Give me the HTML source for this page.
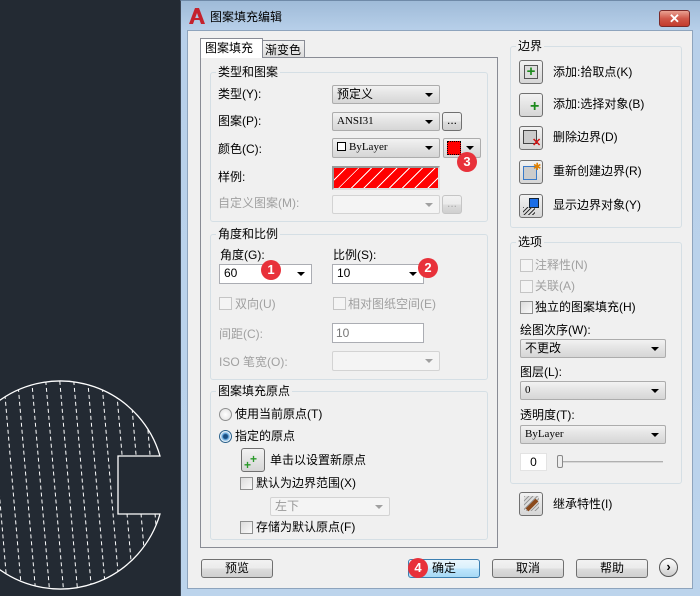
<!DOCTYPE html>
<html><head><meta charset="utf-8"><style>
*{margin:0;padding:0;box-sizing:border-box}
body{width:700px;height:596px;overflow:hidden;background:#232a33;position:relative;font-family:"Liberation Sans","Noto Sans CJK SC",sans-serif;font-size:12px;color:#000}
.a{position:absolute}
.t{position:absolute;white-space:nowrap;line-height:14px;font-size:12px}
.dis{color:#a0a0a0}
.grp{position:absolute;border:1px solid #d5dfe5;border-radius:3px}
.gt{position:absolute;background:#f0f0f0;padding:0 2px;font-size:12px;line-height:14px;top:-8px;left:5px}
.cb{position:absolute;border:1px solid #acacac;border-radius:2px;background:linear-gradient(#f2f2f2,#e3e3e3 50%,#d6d6d6);font-size:11px;padding-left:4px;line-height:17px;font-family:"Liberation Serif","Noto Sans CJK SC",serif}
.cb:after{content:"";position:absolute;right:6px;top:7px;border-left:4px solid transparent;border-right:4px solid transparent;border-top:4px solid #000}
.cbw{background:#fff;border-color:#abadb3;border-radius:0}
.cbd{background:#f4f4f4;border-color:#d3d3d3;color:#999}
.cbd:after{border-top-color:#a0a0a0}
.btn{position:absolute;border:1px solid #707070;border-radius:3px;background:linear-gradient(#f2f2f2,#ebebeb 50%,#dddddd 51%,#cfcfcf);text-align:center;line-height:16px;font-size:12px}
.chk{position:absolute;width:13px;height:13px;border:1px solid #8e8f8f;background:linear-gradient(135deg,#dcdcdc,#fafafa)}
.chkd{border-color:#c5c5c5;background:#f4f4f4}
.ib{position:absolute;width:24px;height:24px;border:1px solid #707070;border-radius:3px;background:linear-gradient(#f2f2f2,#d6d6d6)}
.badge{position:absolute;width:20px;height:20px;border-radius:50%;background:#e8313a;color:#fff;text-align:center;line-height:20px;font-size:13px;font-weight:bold}
</style></head><body>

<svg class="a" style="left:0;top:360px" width="180" height="236">
<defs><clipPath id="c"><path d="M160,96 A104,104 0 1,0 160,154 L118,154 L118,96 Z"/></clipPath></defs>
<g clip-path="url(#c)" stroke="#fff" stroke-width="1" stroke-dasharray="4,3">
<line x1="-40" y1="0" x2="-20" y2="236"/><line x1="-26" y1="0" x2="-6" y2="236"/><line x1="-12" y1="0" x2="8" y2="236"/><line x1="2" y1="0" x2="22" y2="236"/><line x1="16" y1="0" x2="36" y2="236"/><line x1="30" y1="0" x2="50" y2="236"/><line x1="44" y1="0" x2="64" y2="236"/><line x1="58" y1="0" x2="78" y2="236"/><line x1="72" y1="0" x2="92" y2="236"/><line x1="86" y1="0" x2="106" y2="236"/><line x1="100" y1="0" x2="120" y2="236"/><line x1="114" y1="0" x2="134" y2="236"/><line x1="128" y1="0" x2="148" y2="236"/><line x1="142" y1="0" x2="162" y2="236"/><line x1="156" y1="0" x2="176" y2="236"/>
</g>
<path d="M160,96 A104,104 0 1,0 160,154 L118,154 L118,96 Z" fill="none" stroke="#fff" stroke-width="1.3"/>
</svg>

<div class="a" style="left:180px;top:0;width:520px;height:596px;background:linear-gradient(#9fbbd8,#b8d0ea 30px,#bcd4ec);border-left:1px solid #3a4452;border-top:1px solid #6f8aa8"></div>
<div class="a" style="left:187px;top:30px;width:506px;height:559px;background:#f0f0f0;border:1px solid #8ea4bd"></div>
<svg class="a" style="left:188px;top:7px" width="18" height="18"><path d="M1,17 L7,1 L11,1 L17,17 L13,17 L9,6 L5,17Z" fill="#c4222d"/><path d="M6,12 L12,12" stroke="#c4222d" stroke-width="2"/></svg>
<div class="t" style="left:210px;top:10px;font-size:12px">图案填充编辑</div>
<div class="a" style="left:659px;top:10px;width:31px;height:17px;border:1px solid #7a2a2a;border-radius:3px;background:linear-gradient(#e9a293,#d0584a 50%,#c33b2d);color:#fff;text-align:center;font-weight:bold;line-height:15px;font-size:13px">✕</div>

<div class="a" style="left:200px;top:57px;width:298px;height:491px;border:1px solid #898c95;background:#fff"></div>
<div class="a" style="left:262px;top:40px;width:43px;height:18px;border:1px solid #898c95;background:linear-gradient(#f2f2f2,#dcdcdc)"></div>
<div class="t" style="left:265px;top:43px">渐变色</div>
<div class="a" style="left:200px;top:38px;width:63px;height:21px;border:1px solid #898c95;border-bottom:none;background:#fff"></div>
<div class="t" style="left:205px;top:41px">图案填充</div>
<div class="a" style="left:201px;top:58px;width:296px;height:489px;background:#f0f0f0"></div>

<div class="grp" style="left:210px;top:72px;width:278px;height:150px"><div class="gt">类型和图案</div></div>
<div class="t" style="left:218px;top:87px">类型(Y):</div>
<div class="t" style="left:218px;top:114px">图案(P):</div>
<div class="t" style="left:218px;top:142px">颜色(C):</div>
<div class="t" style="left:218px;top:170px">样例:</div>
<div class="t dis" style="left:218px;top:196px">自定义图案(M):</div>
<div class="cb" style="left:332px;top:85px;width:108px;height:19px;font-family:'Liberation Sans','Noto Sans CJK SC',sans-serif;font-size:12px">预定义</div>
<div class="cb" style="left:332px;top:112px;width:108px;height:19px">ANSI31</div>
<div class="btn" style="left:442px;top:112px;width:20px;height:19px;line-height:14px">...</div>
<div class="cb" style="left:332px;top:138px;width:108px;height:20px"><span style="display:inline-block;width:9px;height:9px;border:1px solid #000;background:#fff;margin-right:3px;vertical-align:-1px"></span>ByLayer</div>
<div class="cb" style="left:443px;top:138px;width:38px;height:20px"><span class="a" style="left:3px;top:2px;width:14px;height:14px;border:1px dotted #000;background:#f00"></span></div>
<div class="a" style="left:332px;top:166px;width:108px;height:24px;border:2px solid #9a9a9a;border-right-color:#ddd;border-bottom-color:#ddd;background:repeating-linear-gradient(135deg,#f00 0 8px,#fff 8px 9px)"></div>
<div class="cb cbd" style="left:332px;top:195px;width:108px;height:19px"></div>
<div class="btn" style="left:442px;top:195px;width:20px;height:19px;border-color:#c5c5c5;color:#aaa;line-height:14px">...</div>

<div class="grp" style="left:210px;top:234px;width:278px;height:146px"><div class="gt">角度和比例</div></div>
<div class="t" style="left:220px;top:248px">角度(G):</div>
<div class="t" style="left:333px;top:248px">比例(S):</div>
<div class="cb cbw" style="left:219px;top:264px;width:93px;height:20px;font-family:'Liberation Sans',sans-serif;font-size:12px">60</div>
<div class="cb cbw" style="left:332px;top:264px;width:92px;height:20px;font-family:'Liberation Sans',sans-serif;font-size:12px">10</div>
<div class="chk chkd" style="left:219px;top:297px"></div><div class="t dis" style="left:235px;top:297px">双向(U)</div>
<div class="chk chkd" style="left:333px;top:297px"></div><div class="t dis" style="left:348px;top:297px">相对图纸空间(E)</div>
<div class="t dis" style="left:219px;top:327px">间距(C):</div>
<div class="a" style="left:332px;top:323px;width:92px;height:20px;border:1px solid #abadb3;background:#fff;padding-left:3px;line-height:18px;color:#777">10</div>
<div class="t dis" style="left:219px;top:355px">ISO 笔宽(O):</div>
<div class="cb cbd" style="left:332px;top:351px;width:108px;height:20px"></div>

<div class="grp" style="left:210px;top:391px;width:278px;height:149px"><div class="gt">图案填充原点</div></div>
<div class="a" style="left:219px;top:408px;width:13px;height:13px;border-radius:50%;border:1px solid #8e8f8f;background:radial-gradient(#fff,#ddd)"></div>
<div class="t" style="left:235px;top:407px">使用当前原点(T)</div>
<div class="a" style="left:219px;top:430px;width:13px;height:13px;border-radius:50%;border:1px solid #2c628b;background:radial-gradient(#1a4d80 0 2px,#5aa0d8 3px,#e8f2fa 5px)"></div>
<div class="t" style="left:235px;top:429px">指定的原点</div>
<div class="ib" style="left:241px;top:448px"><span class="a" style="left:8px;top:3px;color:#2a9a2a;font-weight:bold;font-size:12px">+</span><span class="a" style="left:2px;top:9px;color:#2a9a2a;font-weight:bold;font-size:12px">+</span></div>
<div class="t" style="left:270px;top:453px">单击以设置新原点</div>
<div class="chk" style="left:240px;top:477px"></div><div class="t" style="left:256px;top:476px">默认为边界范围(X)</div>
<div class="cb cbd" style="left:270px;top:497px;width:120px;height:19px;font-family:'Liberation Sans','Noto Sans CJK SC',sans-serif;font-size:12px">左下</div>
<div class="chk" style="left:240px;top:521px"></div><div class="t" style="left:256px;top:520px">存储为默认原点(F)</div>

<div class="grp" style="left:510px;top:46px;width:172px;height:182px"><div class="gt">边界</div></div>
<div class="ib" style="left:519px;top:60px"><span class="a" style="left:4px;top:4px;width:14px;height:14px;border:1px solid #555;background:#ddd;color:#1c8a1c;font-weight:bold;font-size:15px;line-height:12px;text-align:center">+</span></div>
<div class="t" style="left:553px;top:65px">添加:拾取点(K)</div>
<div class="ib" style="left:519px;top:93px"><span class="a" style="left:10px;top:6px;color:#1c8a1c;font-weight:bold;font-size:16px;line-height:14px">+</span></div>
<div class="t" style="left:553px;top:97px">添加:选择对象(B)</div>
<div class="ib" style="left:519px;top:126px"><span class="a" style="left:3px;top:3px;width:14px;height:14px;border:1px solid #444;background:#ccc"></span><span class="a" style="left:12px;top:9px;color:#d01010;font-weight:bold;font-size:11px">✕</span></div>
<div class="t" style="left:553px;top:130px">删除边界(D)</div>
<div class="ib" style="left:519px;top:160px"><span class="a" style="left:3px;top:5px;width:14px;height:14px;border:1px solid #3a7ac8;background:#ccc"></span><span class="a" style="left:13px;top:1px;color:#e08000;font-size:10px">✱</span></div>
<div class="t" style="left:553px;top:164px">重新创建边界(R)</div>
<div class="ib" style="left:519px;top:194px"><span class="a" style="left:9px;top:3px;width:10px;height:10px;background:#1a6ee8;border:1px solid #123"></span><span class="a" style="left:3px;top:12px;width:12px;height:8px;background:repeating-linear-gradient(135deg,#333 0 1px,transparent 1px 3px)"></span></div>
<div class="t" style="left:553px;top:198px">显示边界对象(Y)</div>

<div class="grp" style="left:510px;top:242px;width:172px;height:242px"><div class="gt">选项</div></div>
<div class="chk chkd" style="left:520px;top:259px"></div><div class="t dis" style="left:535px;top:258px">注释性(N)</div>
<div class="chk chkd" style="left:520px;top:280px"></div><div class="t dis" style="left:535px;top:279px">关联(A)</div>
<div class="chk" style="left:520px;top:301px"></div><div class="t" style="left:535px;top:300px">独立的图案填充(H)</div>
<div class="t" style="left:520px;top:323px">绘图次序(W):</div>
<div class="cb" style="left:520px;top:339px;width:146px;height:19px;font-family:'Liberation Sans','Noto Sans CJK SC',sans-serif;font-size:12px">不更改</div>
<div class="t" style="left:520px;top:365px">图层(L):</div>
<div class="cb" style="left:520px;top:381px;width:146px;height:19px">0</div>
<div class="t" style="left:520px;top:408px">透明度(T):</div>
<div class="cb" style="left:520px;top:425px;width:146px;height:19px">ByLayer</div>
<div class="a" style="left:520px;top:453px;width:27px;height:18px;background:#fff;border:1px solid #e3e3e3;text-align:center;line-height:16px">0</div>
<div class="a" style="left:557px;top:461px;width:106px;height:2px;background:#d8d8d8;border-top:1px solid #b0b0b0"></div>
<div class="a" style="left:557px;top:455px;width:6px;height:13px;border:1px solid #888;border-radius:2px;background:#eee"></div>
<div class="ib" style="left:519px;top:492px"><span class="a" style="left:4px;top:3px;width:15px;height:15px;background:repeating-linear-gradient(135deg,#999 0 1px,#ddd 1px 3px)"></span><span class="a" style="left:5px;top:10px;width:14px;height:4px;background:#8b4a1c;transform:rotate(-45deg)"></span></div>
<div class="t" style="left:553px;top:497px">继承特性(I)</div>

<div class="btn" style="left:201px;top:559px;width:72px;height:19px">预览</div>
<div class="btn" style="left:408px;top:559px;width:72px;height:19px;border-color:#3c7fb1;background:linear-gradient(#eaf6fd,#d9f0fc 50%,#bee6fd 51%,#a7d9f5)">确定</div>
<div class="btn" style="left:492px;top:559px;width:72px;height:19px">取消</div>
<div class="btn" style="left:576px;top:559px;width:72px;height:19px">帮助</div>
<div class="a" style="left:659px;top:558px;width:19px;height:19px;border-radius:50%;border:1px solid #555;background:linear-gradient(#fff,#ccc);text-align:center;line-height:16px;font-weight:bold;font-size:13px">›</div>

<div class="badge" style="left:261px;top:260px">1</div>
<div class="badge" style="left:418px;top:258px">2</div>
<div class="badge" style="left:457px;top:152px">3</div>
<div class="badge" style="left:408px;top:558px">4</div>
</body></html>
